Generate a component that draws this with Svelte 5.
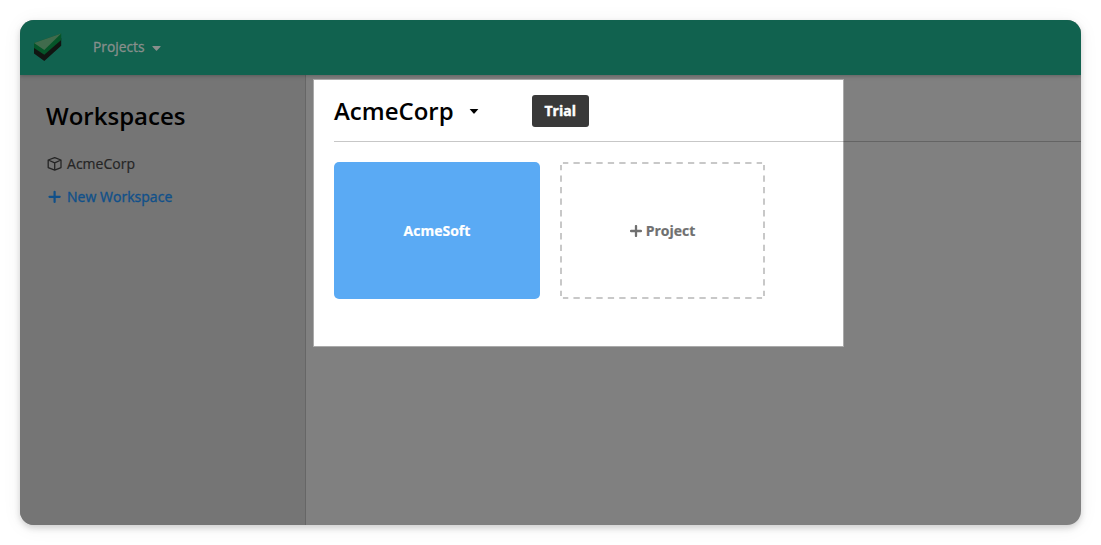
<script>
  const projects = ['AcmeSoft'];
  const workspaces = ['AcmeCorp'];
</script>

<div class="window">
  <header>
    <svg class="logo" width="28" height="28" viewBox="0 0 28 28">
      <path d="M0 13 L10.3 20 L27.2 5 V12.8 L10.3 27.9 L0 20.5 Z" fill="#111512" />
      <path d="M0 10 L27.2 0.6 V7 L10.3 21.8 L0 15 Z" fill="#055529" />
      <path d="M0 10 L27.2 0.6 L10.3 17 Z" fill="#406b4c" />
    </svg>
    <span class="nav">Projects</span>
    <svg class="nav-caret" width="9" height="5" viewBox="0 0 9 5"><path d="M0.7 0 H8.3 Q9 .3 8.5 .8 L5 4.6 Q4.5 5 4 4.6 L.5 .8 Q0 .3 .7 0Z" fill="#888f8c" /></svg>
  </header>
  <div class="body">
    <aside>
      <h2>Workspaces</h2>
      {#each workspaces as name}
        <div class="item">
          <svg width="16" height="16" viewBox="0 0 16 16" fill="none" stroke="#252525" stroke-width="1.3" stroke-linejoin="round">
            <path d="M7.7 1.6 L14 4 V11.6 L7.7 14.2 L1.2 11.6 V4 Z M1.2 4 L7.7 6.9 L14 4 M7.7 6.9 V14.2" />
          </svg>
          <span>{name}</span>
        </div>
      {/each}
      <div class="item new">
        <svg width="16" height="16" viewBox="0 0 16 16" stroke="#10508a" stroke-width="2.2" stroke-linecap="round"><path d="M7.6 2.8 V12.9 M2.5 7.85 H12.7" /></svg>
        <span>New Workspace</span>
      </div>
    </aside>
    <main>
      <div class="spotlight"></div>
      <div class="title">
        <h1>AcmeCorp</h1>
        <svg class="caret" width="10" height="5" viewBox="0 0 10 5"><path d="M0.6 0 H9.4 L5.4 4.5 Q5 4.9 4.6 4.5 Z" /></svg>
        <span class="badge">Trial</span>
      </div>
      <div class="cards">
        {#each projects as name}
          <div class="card">{name}</div>
        {/each}
        <div class="card add">
          <svg class="outline" width="205" height="137" viewBox="0 0 205 137" fill="none" stroke="#c8c8c8" stroke-width="2">
            <path d="M2.9 1 H202.1 M2.9 136 H202.1" stroke-dasharray="6.3 5.15" stroke-dashoffset="0.9" />
            <path d="M1 2.9 V134.1 M204 2.9 V134.1" stroke-dasharray="6.3 5.22" stroke-dashoffset="0.9" />
          </svg>
          <svg width="12" height="12" viewBox="0 0 12 12" stroke="#707070" stroke-width="2.3" stroke-linecap="round"><path d="M6 1.1 V10.9 M1.1 6 H10.9" /></svg>
          <span>Project</span>
        </div>
      </div>
    </main>
  </div>
</div>

<style>
  :global(body) { background: #fff; }
  .window {
    box-sizing: border-box;
    width: 1061px;
    height: 505px;
    margin: 20px;
    border-radius: 14px;
    overflow: hidden;
    display: flex;
    flex-direction: column;
    background: #808080;
    box-shadow: 0 3px 6px rgba(0, 0, 0, .16), 0 2px 20px rgba(0, 0, 0, .06);
    font-family: "Open Sans", sans-serif;
    font-size: 14px;
    color: #000;
  }
  header {
    height: 55px;
    flex: none;
    display: flex;
    align-items: center;
    background: #11624f;
    box-shadow: 0 1px 4px rgba(0, 0, 0, .25);
    position: relative;
    box-sizing: border-box;
    padding: 0 0 2px 14px;
  }
  .logo { margin-right: 31px; }
  .nav { color: #888f8c; font-weight: 500; font-size: 13.8px; -webkit-text-stroke: .3px; }
  .nav-caret { margin: 3px 0 0 7px; }
  .body { flex: 1; display: flex; }
  aside {
    width: 286px;
    box-sizing: border-box;
    padding: 24px 0 0 26px;
    background: #757575;
    border-right: 1px solid #666;
  }
  h1, h2 { margin: 0; font-size: 24px; line-height: 34px; font-weight: 600; }
  h2 { margin-bottom: 14px; }
  .item {
    height: 33px;
    display: flex;
    align-items: center;
    gap: 4px;
    padding-left: 1px;
    color: #252525;
    font-weight: 500;
    letter-spacing: .03px;
    -webkit-text-stroke: .2px;
  }
  .item svg { flex: none; }
  .new { color: #10508a; -webkit-text-stroke: .35px; }
  main { flex: 1; padding-left: 28px; position: relative; }
  .spotlight {
    position: absolute;
    left: 7px;
    top: 4px;
    width: 529px;
    height: 266px;
    border: 1px solid #aaa;
    background: #fff;
  }
  .title, .cards { position: relative; display: flex; }
  .title {
    height: 67px;
    box-sizing: border-box;
    padding-top: 6px;
    align-items: center;
    border-bottom: 1px solid rgba(0, 0, 0, .22);
  }
  .caret { margin: 0 0 0 15px; }
  .badge {
    margin-left: 53px;
    width: 57px;
    height: 32px;
    border-radius: 3px;
    background: #393939;
    color: #fff;
    font-weight: 700;
    line-height: 32px;
    text-align: center;
    -webkit-text-stroke: .4px;
  }
  .cards { padding-top: 20px; gap: 20px; }
  .card {
    box-sizing: border-box;
    width: 206px;
    height: 137px;
    border-radius: 5px;
    background: #5aaaf4;
    color: #fff;
    font-weight: 700;
    display: flex;
    align-items: center;
    justify-content: center;
    -webkit-text-stroke: .2px;
  }
  .add {
    position: relative;
    width: 205px;
    gap: 4px;
    color: #707070;
    background: none;
  }
  .outline { position: absolute; inset: 0; }
</style>
